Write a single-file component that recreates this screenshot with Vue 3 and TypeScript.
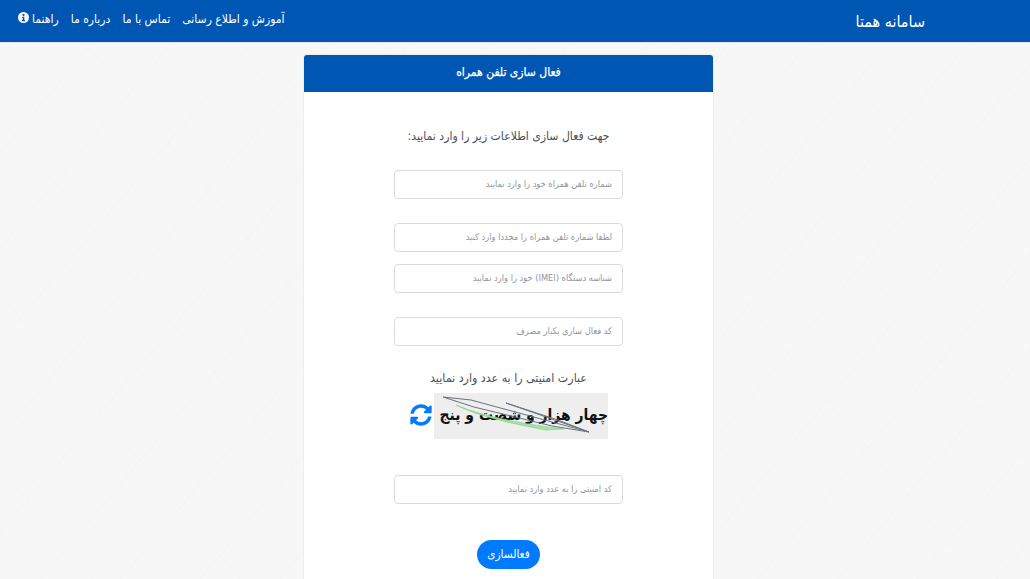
<script setup lang="ts">
const links: string[] = ['آموزش و اطلاع رسانی', 'تماس با ما', 'درباره ما']
</script>

<template>
  <div class="page" dir="rtl">
    <header class="navbar">
      <div class="brand">سامانه همتا</div>
      <nav class="links">
        <a v-for="l in links" :key="l" class="link">{{ l }}</a>
        <a class="link help">
          <span>راهنما</span>
          <svg class="info" viewBox="0 0 16 16" width="11" height="11">
            <circle cx="8" cy="8" r="8" fill="#fff" />
            <circle cx="8" cy="4.2" r="1.6" fill="#0056b3" />
            <path d="M5.8 6.8h3.4v5h1.1v1.6H5.8v-1.6h1.1V8.4H5.8z" fill="#0056b3" />
          </svg>
        </a>
      </nav>
    </header>

    <div class="content">
      <main class="card">
        <div class="card-head">فعال سازی تلفن همراه</div>
        <form class="card-body" @submit.prevent>
          <p class="lead">جهت فعال سازی اطلاعات زیر را وارد نمایید:</p>
          <input class="field f1" placeholder="شماره تلفن همراه خود را وارد نمایید" />
          <input class="field f2" placeholder="لطفا شماره تلفن همراه را مجددا وارد کنید" />
          <input class="field f3" placeholder="شناسه دستگاه (IMEI) خود را وارد نمایید" />
          <input class="field f4" placeholder="کد فعال سازی یکبار مصرف" />
          <p class="cap-label">عبارت امنیتی را به عدد وارد نمایید</p>
          <div class="cap-row">
            <div class="captcha">
              <span class="cap-text">چهار هزار و شصت و پنج</span>
              <svg class="cap-lines" viewBox="0 0 174 46" width="174" height="46">
                <path d="M22 12 C50 24 95 32 130 36 L112 37 C80 31 46 24 22 12Z" fill="#a6e3a6" stroke="#7ccb7c" stroke-width=".6" />
                <path d="M9 4 L37 7 L155 39 L118 33 L40 14 Z" fill="none" stroke="#6a7280" stroke-width="1" />
                <path d="M72 10 L155 39 L124 27 Z" fill="none" stroke="#6a7280" stroke-width="1" />
              </svg>
            </div>
            <svg class="refresh" viewBox="0 0 512 512" width="22" height="22">
              <path fill="#007bff" d="M370.72 133.28C339.458 104.008 298.888 87.962 255.848 88c-77.458.068-144.328 53.178-162.791 126.85-1.344 5.363-6.122 9.15-11.651 9.15H24.103c-7.498 0-13.194-6.807-11.807-14.176C33.933 94.924 134.813 8 256 8c66.448 0 126.791 26.136 171.315 68.685L463.03 40.97C478.149 25.851 504 36.559 504 57.941V192c0 13.255-10.745 24-24 24H345.941c-21.382 0-32.09-25.851-16.971-40.971l41.75-41.749zM32 296h134.059c21.382 0 32.09 25.851 16.971 40.971l-41.75 41.75c31.262 29.273 71.835 45.319 114.876 45.28 77.418-.07 144.315-53.144 162.787-126.849 1.344-5.363 6.122-9.15 11.651-9.15h57.304c7.498 0 13.194 6.807 11.807 14.176C478.067 417.076 377.187 504 256 504c-66.448 0-126.791-26.136-171.315-68.685L48.97 471.03C33.851 486.149 8 475.441 8 454.059V320c0-13.255 10.745-24 24-24z" />
            </svg>
          </div>
          <input class="field f5" placeholder="کد امنیتی را به عدد وارد نمایید" />
          <button class="submit" type="submit">فعالسازی</button>
        </form>
      </main>
    </div>
  </div>
</template>

<style>
html, body { margin: 0; height: 100%; overflow: hidden; }
</style>

<style scoped>
.page {
  height: 579px;
  overflow: hidden;
  font-family: "DejaVu Sans Condensed", "DejaVu Sans", sans-serif;
  background:
    repeating-linear-gradient(130deg, transparent 0 37px, #f4f4f4 37px 38px, transparent 38px 61px),
    repeating-linear-gradient(50deg, transparent 0 70px, #f5f5f5 70px 71px, transparent 71px 113px),
    #f7f7f7;
  color: #495057;
}
.navbar {
  height: 42px;
  box-sizing: content-box;
  background: #0056b3;
  border-bottom: 1px solid #dfe6f2;
  display: flex;
  align-items: center;
  justify-content: space-between;
  padding: 0 105px 0 0;
  color: #fff;
}
.brand { font-size: 16px; margin-top: 1px; }
.links { display: flex; align-items: center; gap: 12px; padding-left: 18px; }
.link { font-size: 12px; color: #fff; margin-top: -5px; white-space: nowrap; }
.help { display: flex; align-items: center; gap: 3px; }
.info { margin-top: -2px; }
.content { padding-right: 13px; }
.card {
  width: 409px;
  margin: 12px auto 0;
  background: #fff;
  border-radius: 3px 3px 0 0;
  box-shadow: 0 0 0 1px #eeeeee;
}
.card-head {
  height: 37px;
  line-height: 34px;
  background: #0056b3;
  color: #fff;
  text-align: center;
  font-size: 12px;
  -webkit-text-stroke: 0.25px #fff;
  border-radius: 3px 3px 0 0;
}
.card-body {
  display: flex;
  flex-direction: column;
  align-items: center;
  height: 500px;
}
.lead {
  margin: 35px 0 0;
  font-size: 12.1px;
  line-height: 18px;
}
.field {
  width: 229px;
  height: 29px;
  box-sizing: border-box;
  border: 1px solid #d9dcdf;
  border-radius: 4px;
  background: #fff;
  padding: 0 10px 2px;
  font-family: inherit;
  font-size: 9.2px;
  direction: rtl;
  outline: none;
  flex: none;
}
.field::placeholder { color: #8f959b; opacity: 1; }
.f1 { margin-top: 25px; }
.f2 { margin-top: 24px; }
.f3 { margin-top: 12px; }
.f4 { margin-top: 24px; }
.f5 { margin-top: 36px; }
.cap-label {
  margin: 23px 0 0;
  font-size: 12.3px;
  line-height: 18px;
}
.cap-row {
  display: flex;
  align-items: center;
  gap: 2px;
  margin-top: 6px;
  margin-left: 1px;
}
.refresh { margin-bottom: 2px; }
.captcha {
  position: relative;
  width: 174px;
  height: 46px;
  background: #eeeeee;
  display: flex;
  align-items: center;
  justify-content: flex-start;
  overflow: hidden;
}
.cap-text {
  font-size: 15.5px;
  font-weight: 700;
  color: #111;
  white-space: nowrap;
  margin-top: -3px;
}
.cap-lines { position: absolute; inset: 0; }
.submit {
  margin-top: 36px;
  width: 63px;
  height: 29px;
  flex: none;
  border: none;
  border-radius: 15px;
  background: #007bff;
  color: #fff;
  font-family: inherit;
  font-size: 11.7px;
  padding: 0 0 2px;
}
</style>
